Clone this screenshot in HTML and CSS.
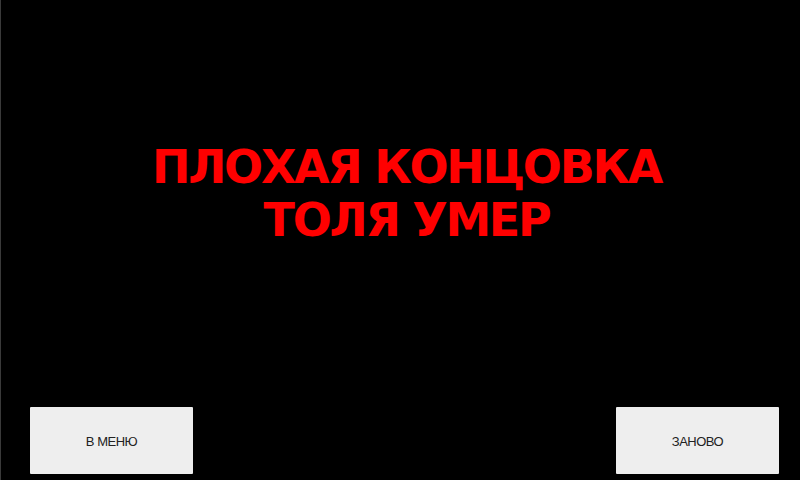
FILE: index.html
```html
<!DOCTYPE html>
<html>
<head>
    <meta charset="UTF-8">
    <title>Плохая концовка</title>
    <link rel="stylesheet" href="styles.css">
</head>
<body>
    <div class="screen">
        <div class="ending">
            <h1>ПЛОХАЯ КОНЦОВКА<br>ТОЛЯ УМЕР</h1>
        </div>
        <div class="controls">
            <button class="btn">В МЕНЮ</button>
            <button class="btn">ЗАНОВО</button>
        </div>
    </div>
</body>
</html>
```

FILE: styles.css
```css
html, body {
    margin: 0;
    height: 100%;
    background-color: #000;
}

.screen {
    height: 480px;
    display: flex;
    flex-direction: column;
    border-left: 1px solid #3a3a3a;
    box-sizing: border-box;
}

.ending {
    flex: 1;
    display: flex;
    align-items: center;
    justify-content: center;
    padding-bottom: 20px;
}

h1 {
    margin: 0;
    color: #ff0000;
    font-family: "DejaVu Sans", sans-serif;
    font-weight: bold;
    font-size: 46px;
    line-height: 53px;
    letter-spacing: -2.3px;
    text-align: center;
    padding-left: 12px;
}

.controls {
    display: flex;
    justify-content: space-between;
    padding: 0 21px 6px 29px;
}

.btn {
    width: 163px;
    height: 67px;
    padding-top: 2px;
    background-color: #eeeeee;
    border: none;
    border-radius: 1px;
    font-family: "Liberation Sans", Arial, sans-serif;
    font-size: 13px;
    color: #222;
    letter-spacing: -0.5px;
}
```
